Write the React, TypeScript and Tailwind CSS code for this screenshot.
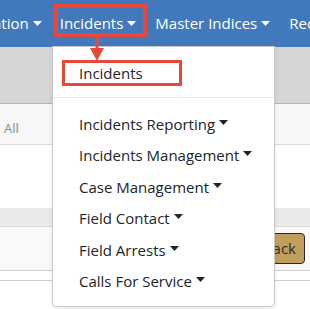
import React from "react";

const Caret = ({ color = "currentColor" }: { color?: string }) => (
  <svg width="9" height="5" viewBox="0 0 9 5" className="inline-block ml-[4px] mb-[3px]">
    <path d="M0 0 L9 0 L4.5 5 Z" fill={color} />
  </svg>
);

const items = [
  "Incidents Reporting",
  "Incidents Management",
  "Case Management",
  "Field Contact",
  "Field Arrests",
  "Calls For Service",
];

export default function App() {
  return (
    <div
      className="relative w-[310px] h-[309px] overflow-hidden bg-white text-[#212529]"
      style={{ fontFamily: '"Open Sans", "Noto Sans", sans-serif' }}
    >
      {/* navbar */}
      <div className="h-[47px] bg-[#4279bd] flex items-center text-white text-[15px] whitespace-nowrap">
        <span className="ml-[-7px]">ation<Caret color="#fff" /></span>
        <span className="ml-[18px]">Incidents<Caret color="#fff" /></span>
        <span className="ml-[19px]">Master Indices<Caret color="#fff" /></span>
        <span className="ml-[19px]">Records</span>
      </div>
      {/* page content */}
      <div className="h-[57px] bg-[#d6d6d6] border-b border-[#b5b5b5]" />
      <div className="h-[41px] bg-[#f7f7f7] border-b border-[#dcdcdc] flex items-center pt-[9px] text-[13px] text-[#8a8a8a]">
        <span className="ml-[4px]">All</span>
      </div>
      <div className="h-[63px] bg-white" />
      <div className="h-[19px] bg-[#e9e9e9] border-b border-[#dadada]" />
      <div className="h-[44px] bg-[#f9f9f9] border-b border-[#cfcfcf] flex items-center justify-end pr-[5px]">
        <div className="h-[31px] px-[8px] bg-[#bf9f5b] border border-[#2a2a2a] rounded-[4px] flex items-center text-[15px] text-[#2d2d2d]">
          Go Back
        </div>
      </div>
      <div className="h-[10px] bg-white border-b border-[#cfcfcf]" />

      {/* dropdown menu */}
      <div className="absolute left-[52px] top-[46px] w-[223px] h-[261px] bg-white border border-[#c8c8c8] rounded-b-[4px] shadow-[0_2px_4px_rgba(0,0,0,0.08)] text-[15px]">
        <div className="h-[50px] flex items-center pl-[26px] pt-[2px]">Incidents</div>
        <div className="h-px bg-[#e9ecef]" />
        <div className="flex flex-col pt-[10px]">
          {items.map((t) => (
            <div key={t} className="h-[31.5px] flex items-center pl-[26px] whitespace-nowrap">
              {t}
              <Caret color="#212529" />
            </div>
          ))}
        </div>
      </div>

      {/* annotations */}
      <div className="absolute left-[54px] top-[4px] w-[93px] h-[33px] border-[4px] border-[#e8483c]" />
      <div className="absolute left-[62px] top-[60px] w-[120px] h-[26px] border-[3px] border-[#e8483c]" />
      <svg className="absolute left-[88px] top-[36px]" width="18" height="26" viewBox="0 0 18 26">
        <rect x="7.5" y="0" width="3" height="14" fill="#e8483c" />
        <path d="M2 12 L16 12 L9 25 Z" fill="#e8483c" />
      </svg>
    </div>
  );
}
